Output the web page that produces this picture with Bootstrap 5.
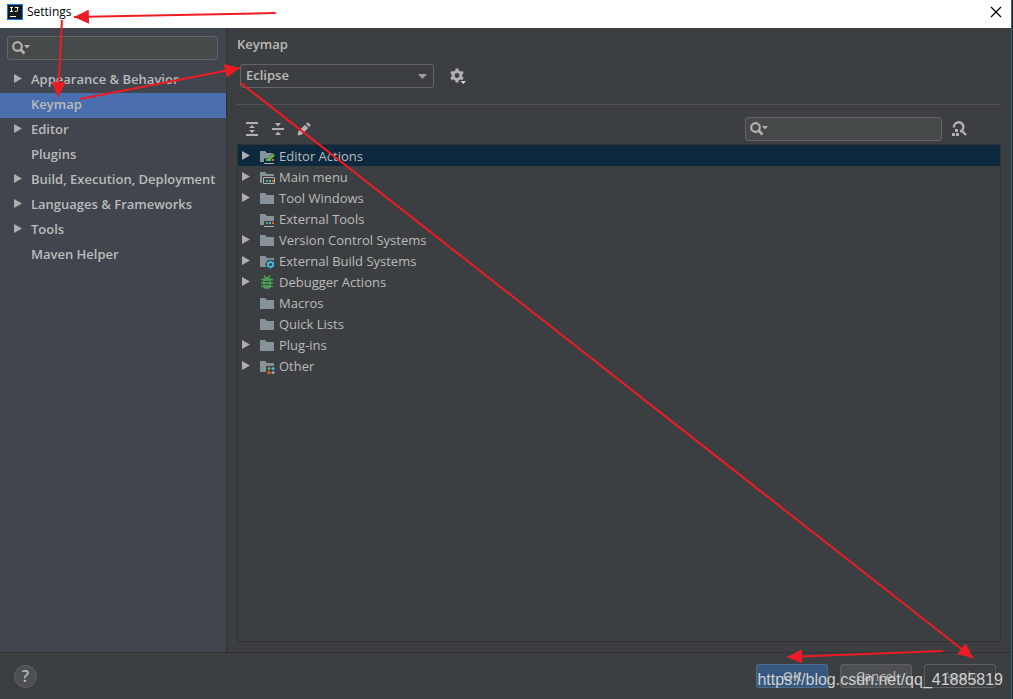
<!DOCTYPE html>
<html lang="en">
<head>
<meta charset="utf-8">
<meta name="viewport" content="width=device-width, initial-scale=1">
<title>Settings</title>
<link rel="stylesheet" href="https://cdn.jsdelivr.net/npm/bootstrap@5.3.0/dist/css/bootstrap.min.css">
<style>
  body { font: 13px/20px "Open Sans", "Noto Sans", sans-serif; background: #3c3f41; color: #bbbbbb; }
  svg { display: block; flex: none; }
  .window { min-height: 100vh; border-right: 1px solid #222a30; box-shadow: inset -1px 0 #2f6479; padding-right: 1px; }
  .title-bar { height: 28px; padding: 0 7px 4px; background: #fff; color: #000; }
  .title-bar h1 { font-size: 12px; line-height: 20px; font-weight: 400; }
  .plain { border: 0; padding: 0; background: none; color: inherit; }
  .side { width: 227px; background: #41454e; border-right: 1px solid #323232; font-weight: 600; }
  .find-box { position: relative; height: 24px; background: #45494a; border: 1px solid #646464; border-radius: 3px; }
  .find-box input { width: 100%; height: 100%; padding: 0 6px 0 26px; border: 0; background: none; color: inherit; outline: 0; }
  .find-box svg { position: absolute; left: 3px; top: 3px; }
  .side .find-box { margin: 8px 8px 8px 7px; }
  .side a { display: flex; align-items: center; gap: 7px; height: 25px; padding: 0 0 4px 13px; color: inherit; text-decoration: none; }
  .side a.active { background: #4b6eaf; }
  .arrow-slot { width: 11px; flex: none; }
  .main { padding: 6px 10px 10px; min-width: 0; }
  .main h2 { font-size: 13px; line-height: 20px; font-weight: 600; margin: 0 0 10px; }
  .scheme { width: 194px; height: 24px; margin-left: 3px; padding: 0 5px 2px; line-height: 20px; font-size: 13px; font-weight: 600; color: #bbb; border: 1px solid #646464; border-radius: 3px; background-color: #3c3f41; background-size: 9px 5px; background-position: right 6px center; background-image: url("data:image/svg+xml,%3Csvg xmlns='http://www.w3.org/2000/svg' viewBox='0 0 9 5'%3E%3Cpath fill='%239b9d9e' d='M0 0h9L4.500 5z'/%3E%3C/svg%3E"); }
  .rule { height: 1px; background: #515151; margin: 16px 0 12px; }
  .tools { gap: 10px; padding-left: 7px; }
  .main .find-box { width: 197px; }
  .by-key { margin: 0 34px 0 9px; }
  .tree { border: 1px solid #323232; margin: 3px 0 0; }
  .tree li { display: flex; align-items: center; gap: 4px; height: 21px; padding-left: 3px; }
  .tree li.chosen { background: #0d293e; }
  .tree .arrow-slot { margin-right: 3px; }
  .foot { height: 47px; border-top: 1px solid #323232; padding: 0 15px 0 14px; }
  .help { width: 23px; height: 23px; border: 1px solid #5e6060; border-radius: 50%; background: #4c5052; font: 600 16px/20px "Open Sans", sans-serif; }
  .actions { gap: 12px; }
  .act { width: 72px; height: 24px; padding: 0; font-size: 13px; line-height: 20px; color: #bbb; background: #4c5052; border: 1px solid #5e6060; border-radius: 3px; }
  .act.ok { background: #365880; border-color: #4c708c; font-weight: 600; }
  .act.off { background: #3c3f41; color: #777; }
  .site { position: absolute; right: 9px; bottom: 8px; font: 16px/22px "Liberation Sans", sans-serif; color: #d0d0d0; pointer-events: none; }
  .notes { position: absolute; inset: 0; width: 100%; height: 100%; pointer-events: none; }
</style>
</head>
<body>
<svg width="0" height="0" class="position-absolute" aria-hidden="true">
  <defs>
    <symbol id="tri" viewBox="0 0 11 11"><path fill="#adadad" d="M1 1 9 5.500 1 10z"/></symbol>
    <symbol id="lens" viewBox="0 0 20 16"><circle cx="6.500" cy="6.500" r="4.300" fill="none" stroke="#afb1b3" stroke-width="2.200"/><path d="m9.500 9.500 4 4" stroke="#afb1b3" stroke-width="2.600"/><path fill="#afb1b3" d="M13 5h6l-3 3.500z"/></symbol>
    <symbol id="dir" viewBox="0 0 16 16"><path fill="#87939a" d="M1 3h5l2 2h7v9H1z"/></symbol>
    <symbol id="dots" viewBox="0 0 16 16"><path fill="#62b543" d="M7 11h2v2H7z"/><path fill="#40b6e0" d="M10 11h2v2h-2z"/><path fill="#f26522" d="M13 11h2v2h-2z"/></symbol>
  </defs>
</svg>
<div class="window d-flex flex-column position-relative">
  <header class="title-bar d-flex align-items-center">
    <svg width="16" height="16" viewBox="0 0 16 16"><path fill="#087cfa" d="M0 0h16v16H0z"/><path fill="#171717" d="M1 1h14v14H1z"/><path d="M3 3.500h3M4.500 3.500v4M3 7.500h3M8 3.500h3.500M10.500 3.500v3q0 1-1 1H8M3 12.500h6" fill="none" stroke="#fff"/></svg>
    <h1 class="m-0 ms-1 flex-grow-1">Settings</h1>
    <button class="plain" aria-label="Close"><svg width="16" height="16" viewBox="0 0 16 16"><path d="m3 3 10 10M13 3 3 13" stroke="#000" stroke-width="1.200"/></svg></button>
  </header>
  <div class="d-flex flex-grow-1">
    <nav class="side flex-shrink-0" aria-label="Settings pages">
      <div class="find-box"><svg width="20" height="16"><use href="#lens"/></svg><input type="search" aria-label="Search settings"></div>
      <a href="#"><svg width="11" height="11"><use href="#tri"/></svg>Appearance &amp; Behavior</a>
      <a href="#" class="active" aria-current="page"><span class="arrow-slot"></span>Keymap</a>
      <a href="#"><svg width="11" height="11"><use href="#tri"/></svg>Editor</a>
      <a href="#"><span class="arrow-slot"></span>Plugins</a>
      <a href="#"><svg width="11" height="11"><use href="#tri"/></svg>Build, Execution, Deployment</a>
      <a href="#"><svg width="11" height="11"><use href="#tri"/></svg>Languages &amp; Frameworks</a>
      <a href="#"><svg width="11" height="11"><use href="#tri"/></svg>Tools</a>
      <a href="#"><span class="arrow-slot"></span>Maven Helper</a>
    </nav>
    <main class="main flex-grow-1 d-flex flex-column">
      <h2>Keymap</h2>
      <div class="d-flex align-items-center">
        <select class="form-select scheme" aria-label="Keymap scheme"><option>Eclipse</option></select>
        <button class="plain ms-3" aria-label="Scheme actions"><svg width="16" height="16" viewBox="0 0 16 16"><circle cx="7" cy="7.500" r="3.900" fill="none" stroke="#afb1b3" stroke-width="3"/><path d="M7 .5V3M7 12v2.500M1 4l2 1.200M11 9.800l2 1.200M1 11l2-1.200M11 5.200 13 4" stroke="#afb1b3" stroke-width="3"/><path fill="#3c3f41" d="M9 12h7v4H9z"/><path fill="#d5d5d5" d="M10.500 13H16l-2.750 3z"/></svg></button>
      </div>
      <div class="rule"></div>
      <div class="d-flex align-items-center">
        <div class="tools d-flex flex-grow-1 me-2">
          <button class="plain" aria-label="Expand all"><svg width="16" height="16" viewBox="0 0 16 16"><path fill="#afb1b3" d="M2 1h12v2H2zM2 13h12v2H2zM8 4l3 3H5zM8 12l3-3H5z"/></svg></button>
          <button class="plain" aria-label="Collapse all"><svg width="16" height="16" viewBox="0 0 16 16"><path fill="#afb1b3" d="M2 7h12v2H2zM8 5.500 5 2h6zM8 10.500 5 14h6z"/></svg></button>
          <button class="plain" aria-label="Edit shortcut"><svg width="16" height="16" viewBox="0 0 16 16"><path fill="#afb1b3" d="m1.500 14.500.8-4 6.700-6.700 3.200 3.200-6.700 6.700zM10 2.800l1-1q.8-.7 1.500 0l1.700 1.700q.7.700 0 1.500l-1 1z"/></svg></button>
        </div>
        <div class="find-box"><svg width="20" height="16"><use href="#lens"/></svg><input type="search" aria-label="Search actions"></div>
        <button class="plain by-key" aria-label="Find by shortcut"><svg width="16" height="16" viewBox="0 0 16 16"><path d="M3 6.500a4.700 4.700 0 1 1 6 4M11 10l4 4" fill="none" stroke="#afb1b3" stroke-width="2.400"/><path fill="#afb1b3" d="M4 8h3v3H4zM1 12h3v3H1zM5 12h3v3H5z"/></svg></button>
      </div>
      <ul class="tree list-unstyled flex-grow-1">
        <li class="chosen"><svg class="arrow-slot" width="11" height="11"><use href="#tri"/></svg><svg width="16" height="16" viewBox="0 0 16 16"><use href="#dir"/><path fill="#0d293e" d="M5 10.500h4L14 5h2v11H5z"/><use href="#dots"/><path d="M5 15.500h10" stroke="#afb1b3"/><path d="m9 12.500 6-6" stroke="#62b543" stroke-width="2.600"/></svg>Editor Actions</li>
        <li><svg class="arrow-slot" width="11" height="11"><use href="#tri"/></svg><svg width="16" height="16" viewBox="0 0 16 16"><use href="#dir"/><path fill="#3c3f41" d="M3 7h13v9H3z"/><path d="M4.500 8.500h11v6h-11z" fill="none" stroke="#afb1b3"/><use href="#dots"/></svg>Main menu</li>
        <li><svg class="arrow-slot" width="11" height="11"><use href="#tri"/></svg><svg width="16" height="16"><use href="#dir"/></svg>Tool Windows</li>
        <li><span class="arrow-slot"></span><svg width="16" height="16" viewBox="0 0 16 16"><use href="#dir"/><path fill="#3c3f41" d="M5 10h11v6H5z"/><use href="#dots"/><path d="M5 15.500h10" stroke="#afb1b3"/></svg>External Tools</li>
        <li><svg class="arrow-slot" width="11" height="11"><use href="#tri"/></svg><svg width="16" height="16"><use href="#dir"/></svg>Version Control Systems</li>
        <li><svg class="arrow-slot" width="11" height="11"><use href="#tri"/></svg><svg width="16" height="16" viewBox="0 0 16 16"><use href="#dir"/><circle cx="11.500" cy="11.500" r="5" fill="#3c3f41"/><circle cx="11.500" cy="11.500" r="2.400" fill="none" stroke="#40b6e0" stroke-width="1.800"/><path d="M11.500 7.500V9M11.500 14v1.500M8 9.500l1.300.8M13.700 12.700l1.300.8M8 13.500l1.300-.8M13.700 10.300 15 9.500" stroke="#40b6e0" stroke-width="1.800"/></svg>External Build Systems</li>
        <li><svg class="arrow-slot" width="11" height="11"><use href="#tri"/></svg><svg width="16" height="16" viewBox="0 0 16 16"><path d="m5 1.500 1.500 2M11 1.500l-1.500 2M2 5.500h12M2 9h12M2 12.500h12" stroke="#499c54" stroke-width="1.500"/><rect x="4" y="3" width="8" height="12" rx="4" fill="#499c54"/><path d="M5.500 7.500h5M5.500 10.500h5" stroke="#3c3f41"/></svg>Debugger Actions</li>
        <li><span class="arrow-slot"></span><svg width="16" height="16"><use href="#dir"/></svg>Macros</li>
        <li><span class="arrow-slot"></span><svg width="16" height="16"><use href="#dir"/></svg>Quick Lists</li>
        <li><svg class="arrow-slot" width="11" height="11"><use href="#tri"/></svg><svg width="16" height="16"><use href="#dir"/></svg>Plug-ins</li>
        <li><svg class="arrow-slot" width="11" height="11"><use href="#tri"/></svg><svg width="16" height="16" viewBox="0 0 16 16"><use href="#dir"/><path fill="#3c3f41" d="M7 8h9v8H7z"/><circle cx="10" cy="10.500" r="1.500" fill="#62b543"/><circle cx="14" cy="10.500" r="1.500" fill="#40b6e0"/><circle cx="10" cy="14.500" r="1.500" fill="#f26522"/><circle cx="14" cy="14.500" r="1.500" fill="#9aa7b0"/></svg>Other</li>
      </ul>
    </main>
  </div>
  <footer class="foot d-flex align-items-center">
    <button class="plain help me-auto" aria-label="Help">?</button>
    <div class="actions d-flex"><button class="act ok">OK</button><button class="act">Cancel</button><button class="act off" disabled>Apply</button></div>
  </footer>
  <div class="site">https://blog.csdn.net/qq_41885819</div>
  <svg class="notes" viewBox="0 0 1013 699" preserveAspectRatio="none" aria-hidden="true">
    <defs><marker id="head" viewBox="0 0 15 14" refX="15" refY="7" markerWidth="15" markerHeight="14" markerUnits="userSpaceOnUse" orient="auto"><path fill="#ed1c24" d="M0 0 15 7 0 14z"/></marker></defs>
    <g stroke="#ed1c24" stroke-width="2" marker-end="url(#head)">
      <path d="M276 13 74 17"/><path d="M62 20 58 97"/><path d="M80 99 240 68"/><path d="M241 83 974 658"/><path d="M944 651 788 657"/>
    </g>
  </svg>
</div>
<script src="https://cdn.jsdelivr.net/npm/bootstrap@5.3.0/dist/js/bootstrap.bundle.min.js"></script>
</body>
</html>
